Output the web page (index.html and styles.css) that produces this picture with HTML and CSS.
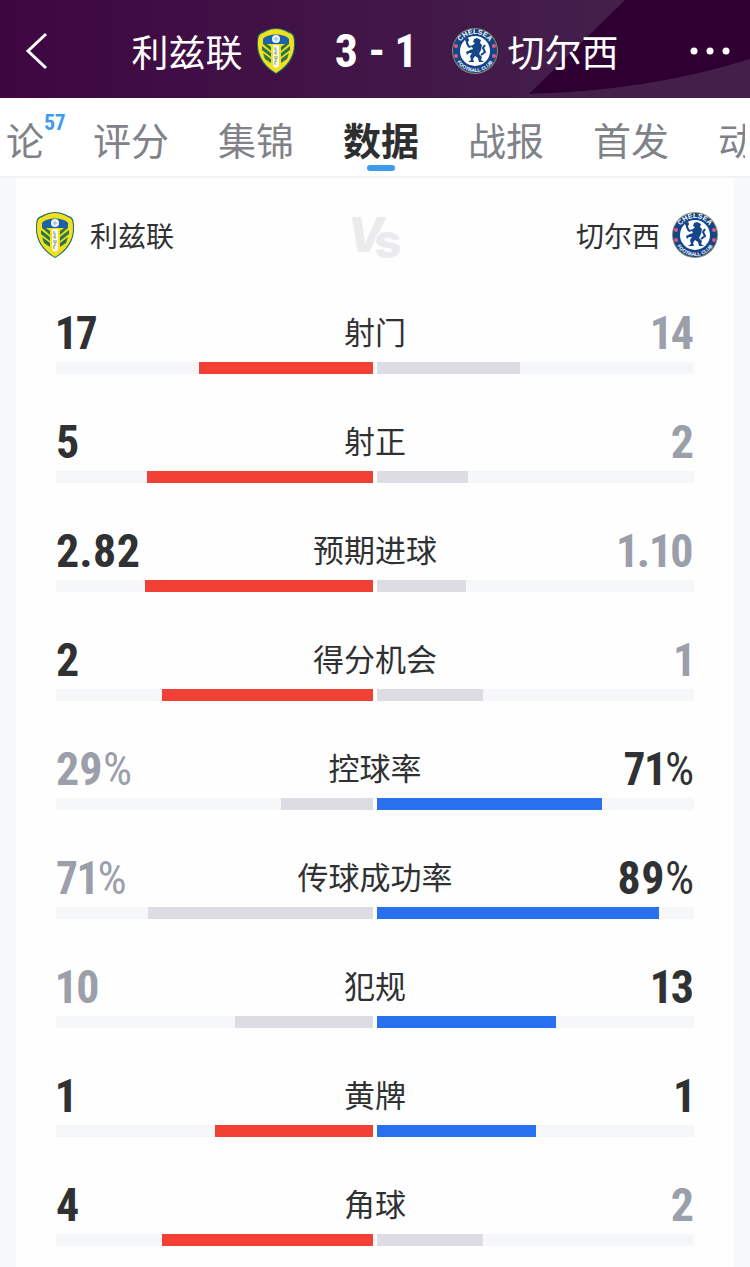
FILE: index.html
```
<!DOCTYPE html>
<html lang="zh-CN">
<head>
    <meta charset="UTF-8">
    <meta name="viewport" content="width=device-width, initial-scale=1.0">
    <link rel="stylesheet" href="styles.css">
    <title>利兹联 3-1 切尔西</title>
</head>
<body>
    <!-- club crests, used in the header and in the team row -->
    <svg class="sprite" aria-hidden="true">
        <symbol id="leeds" viewBox="0 0 46 48">
            <path d="M23 1C29 1 35 4 39 6C42 8 42 13 42 18C42 31 34 41 23 47C12 41 4 31 4 18C4 13 4 8 7 6C11 4 17 1 23 1Z" fill="#1c6b68"/>
            <path d="M23 2C29 2 34 5 38 7C41 9 41 13 41 18C41 30 33 40 23 46C13 40 5 30 5 18C5 13 5 9 8 7C12 5 17 2 23 2Z" fill="#f2df20"/>
            <path d="M10 12C14 6 32 6 36 12V17H10Z" fill="#1b62a8"/>
            <path d="M9 19L18 26V30L9 23ZM10 26L18 32V36L12 32ZM14 17L18 20V24L10 17ZM37 19L28 26V30L37 23ZM36 26L28 32V36L34 32ZM32 17L28 20V24L36 17Z" fill="#2b7549"/>
            <path d="M20 18H26V37C26 42 20 42 20 37Z" fill="#fbfbf2"/>
            <path d="M22 20V23H24M24 25H22V27H24M22 29V32H24V29M22 38V34H24" fill="none" stroke="#7c9872"/>
            <circle cx="23" cy="12" r="4" fill="#f3f8fb"/>
            <path d="M23 9L24 11L26 12L24 13L23 15L22 13L20 12L22 11Z" fill="#a9c9dc"/>
        </symbol>
        <symbol id="chelsea" viewBox="0 0 46 48">
            <circle cx="23" cy="24" r="23" fill="#8b8d72"/>
            <circle cx="23" cy="24" r="22" fill="#144489"/>
            <circle cx="23" cy="24" r="15" fill="#fff"/>
            <path id="arc-top" d="M6 24A17 17 0 0 1 40 24" fill="none"/>
            <path id="arc-bottom" d="M2 24A21 21 0 0 0 44 24" fill="none"/>
            <text class="crest-top"><textPath href="#arc-top" startOffset="50%">CHELSEA</textPath></text>
            <text class="crest-bottom"><textPath href="#arc-bottom" startOffset="50%">FOOTBALL CLUB</textPath></text>
            <g fill="#df5b7c">
                <circle cx="4" cy="19" r="2"/><circle cx="4" cy="29" r="2"/>
                <circle cx="42" cy="19" r="2"/><circle cx="42" cy="29" r="2"/>
            </g>
            <path d="M22 12L25 11L29 13L28 16L30 18L29 23L27 27L30 30L29 33L32 35H27L26 31L23 29L21 32L22 35H16L19 33L18 29L20 26L17 26L15 28L14 25L18 23L21 22L20 20L17 21L16 18L18 19L21 18L23 16L21 15Z" fill="#144489"/>
            <path d="M17 20L15 16V12M29 28L33 25L31 21L33 18" fill="none" stroke="#144489" stroke-width="2"/>
            <circle cx="15" cy="13" r="2" fill="#144489"/>
        </symbol>
    </svg>

    <header class="header">
        <svg class="header-bg" viewBox="0 0 750 98" preserveAspectRatio="none" aria-hidden="true">
            <path d="M625 0L529 94Q650 91 750 59V0Z" fill="#2e0031"/>
            <path d="M529 94Q650 91 750 59V98H525Z" fill="#441f4a"/>
        </svg>
        <button class="icon-button back" aria-label="返回">
            <svg width="28" height="38" viewBox="0 0 28 38"><path d="M26 2L8 19L26 36" fill="none" stroke="#fff" stroke-width="3"/></svg>
        </button>
        <div class="match">
            <div class="side home">利兹联<svg class="crest"><use href="#leeds"/></svg></div>
            <div class="score">3 - 1</div>
            <div class="side"><svg class="crest"><use href="#chelsea"/></svg>切尔西</div>
        </div>
        <button class="icon-button more" aria-label="更多">
            <svg width="44" height="8" viewBox="0 0 44 8" fill="#fff"><circle cx="8" cy="4" r="3.5"/><circle cx="24" cy="4" r="3.5"/><circle cx="40" cy="4" r="3.5"/></svg>
        </button>
    </header>

    <nav class="tabs">
        <div class="tabs-list">
            <a class="tab" href="#">评论<span class="badge">57</span></a>
            <a class="tab" href="#">评分</a>
            <a class="tab" href="#">集锦</a>
            <a class="tab active" href="#">数据</a>
            <a class="tab" href="#">战报</a>
            <a class="tab" href="#">首发</a>
            <a class="tab" href="#">动态</a>
        </div>
    </nav>

    <main class="card">
        <div class="teams">
            <div class="team"><svg class="crest"><use href="#leeds"/></svg>利兹联</div>
            <svg class="vs" width="56" height="50" viewBox="0 0 56 50" aria-label="VS">
                <text x="0" y="42">V<tspan class="vs-s" x="27" y="48">s</tspan></text>
            </svg>
            <div class="team away">切尔西<svg class="crest"><use href="#chelsea"/></svg></div>
        </div>

        <div class="stat">
            <div class="values"><span class="value lead">17</span><span class="label">射门</span><span class="value">14</span></div>
            <div class="bars"><div class="bar left"><div class="fill red" style="width: 54.8%"></div></div><div class="bar"><div class="fill" style="width: 45.2%"></div></div></div>
        </div>
        <div class="stat">
            <div class="values"><span class="value lead">5</span><span class="label">射正</span><span class="value">2</span></div>
            <div class="bars"><div class="bar left"><div class="fill red" style="width: 71.4%"></div></div><div class="bar"><div class="fill" style="width: 28.6%"></div></div></div>
        </div>
        <div class="stat">
            <div class="values"><span class="value lead">2.82</span><span class="label">预期进球</span><span class="value">1.10</span></div>
            <div class="bars"><div class="bar left"><div class="fill red" style="width: 71.9%"></div></div><div class="bar"><div class="fill" style="width: 28.1%"></div></div></div>
        </div>
        <div class="stat">
            <div class="values"><span class="value lead">2</span><span class="label">得分机会</span><span class="value">1</span></div>
            <div class="bars"><div class="bar left"><div class="fill red" style="width: 66.7%"></div></div><div class="bar"><div class="fill" style="width: 33.3%"></div></div></div>
        </div>
        <div class="stat">
            <div class="values"><span class="value">29<span class="percent">%</span></span><span class="label">控球率</span><span class="value lead">71<span class="percent">%</span></span></div>
            <div class="bars"><div class="bar left"><div class="fill" style="width: 29%"></div></div><div class="bar"><div class="fill blue" style="width: 71%"></div></div></div>
        </div>
        <div class="stat">
            <div class="values"><span class="value">71<span class="percent">%</span></span><span class="label">传球成功率</span><span class="value lead">89<span class="percent">%</span></span></div>
            <div class="bars"><div class="bar left"><div class="fill" style="width: 71%"></div></div><div class="bar"><div class="fill blue" style="width: 89%"></div></div></div>
        </div>
        <div class="stat">
            <div class="values"><span class="value">10</span><span class="label">犯规</span><span class="value lead">13</span></div>
            <div class="bars"><div class="bar left"><div class="fill" style="width: 43.5%"></div></div><div class="bar"><div class="fill blue" style="width: 56.5%"></div></div></div>
        </div>
        <div class="stat">
            <div class="values"><span class="value lead">1</span><span class="label">黄牌</span><span class="value lead">1</span></div>
            <div class="bars"><div class="bar left"><div class="fill red" style="width: 50%"></div></div><div class="bar"><div class="fill blue" style="width: 50%"></div></div></div>
        </div>
        <div class="stat">
            <div class="values"><span class="value lead">4</span><span class="label">角球</span><span class="value">2</span></div>
            <div class="bars"><div class="bar left"><div class="fill red" style="width: 66.7%"></div></div><div class="bar"><div class="fill" style="width: 33.3%"></div></div></div>
        </div>
    </main>
</body>
</html>
```
FILE: styles.css
```
* {
    box-sizing: border-box;
}

body {
    margin: 0;
    background-color: #f6f8fa;
    color: #303133;
    font-family: "Noto Sans CJK SC", sans-serif;
}

.sprite {
    display: none;
}

.crest {
    width: 46px;
    height: 48px;
    flex: none;
}

.crest-top,
.crest-bottom {
    fill: #fff;
    font-family: "Liberation Sans", sans-serif;
    font-weight: bold;
    text-anchor: middle;
}

.crest-top {
    font-size: 7px;
}

.crest-bottom {
    font-size: 5px;
}

/* header */

.header {
    position: relative;
    display: flex;
    align-items: center;
    justify-content: space-between;
    height: 98px;
    padding: 4px 20px 0;
    background: linear-gradient(90deg, #3e0641, #421748 55%, #441f4a 80%);
    color: #fff;
}

.header-bg {
    position: absolute;
    inset: 0;
    width: 100%;
    height: 100%;
}

.icon-button {
    position: relative;
    display: flex;
    width: 44px;
    padding: 0;
    border: none;
    background: none;
    cursor: pointer;
}

.match {
    position: relative;
    flex: 1;
    display: grid;
    grid-template-columns: 1fr 153px 1fr;
    align-items: center;
}

.side {
    display: flex;
    align-items: center;
    gap: 10px;
    font-size: 37px;
    line-height: 48px;
}

.home {
    justify-content: flex-end;
}

.score,
.value,
.badge {
    font-family: "Roboto Condensed", "Liberation Sans Narrow", "Liberation Sans", sans-serif;
    font-variant-numeric: proportional-nums;
    font-weight: bold;
}

.score {
    font-size: 46px;
    line-height: 48px;
    text-align: center;
}

/* tabs */

.tabs {
    height: 80px;
    padding: 0 5px;
    border-bottom: 2px solid #f0f2f5;
    background-color: #fff;
}

.tabs-list {
    display: flex;
    justify-content: center;
    gap: 49px;
    height: 78px;
    padding-left: 12px;
    overflow: hidden;
}

.tab {
    position: relative;
    flex: none;
    color: #7f8288;
    font-size: 38px;
    line-height: 82px;
    text-decoration: none;
}

.tab.active {
    color: #2d2e30;
    font-weight: bold;
}

.tab.active::after {
    content: "";
    position: absolute;
    top: 67px;
    left: 50%;
    width: 28px;
    height: 6px;
    margin-left: -14px;
    border-radius: 3px;
    background-color: #3d9bec;
}

.badge {
    position: absolute;
    top: 13px;
    left: 100%;
    color: #3d9bec;
    font-size: 22px;
    line-height: 24px;
}

/* stats card */

.card {
    margin: 0 16px;
    padding: 0 40px;
    background-color: #fefefe;
}

.teams {
    display: grid;
    grid-template-columns: 1fr auto 1fr;
    align-items: center;
    height: 124px;
    margin: 0 -24px;
    padding-bottom: 10px;
}

.team {
    display: flex;
    align-items: center;
    gap: 12px;
    font-size: 28px;
}

.away {
    justify-content: flex-end;
}

.vs {
    overflow: visible;
    fill: #ebebed;
    font-family: Inter, sans-serif;
    font-size: 48px;
    font-style: italic;
    font-weight: 800;
}

.vs-s {
    font-style: normal;
    stroke: #fefefe;
    stroke-width: 2px;
    paint-order: stroke;
}

.stat {
    padding-bottom: 37px;
}

.values {
    display: grid;
    grid-template-columns: 1fr auto 1fr;
    height: 60px;
}

.value {
    color: #9a9faa;
    font-size: 46px;
    line-height: 62px;
}

.value:last-child {
    text-align: right;
}

.value.lead {
    color: #303133;
}

.percent {
    font-weight: normal;
}

.label {
    font-size: 31px;
    line-height: 58px;
}

.bars {
    display: grid;
    grid-template-columns: 1fr 1fr;
    gap: 4px;
}

.bar {
    display: flex;
    height: 12px;
    background-color: #f6f7f9;
}

.bar.left {
    justify-content: flex-end;
}

.fill {
    background-color: #dcdce2;
}

.fill.red {
    background-color: #f24134;
}

.fill.blue {
    background-color: #2870ee;
}
```
